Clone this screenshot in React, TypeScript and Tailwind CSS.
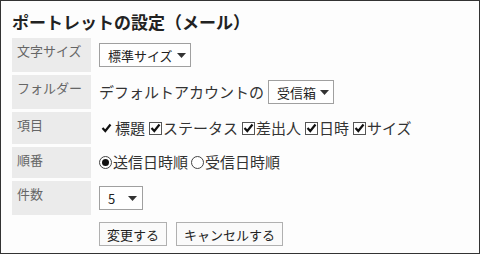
const jp = "font-['Noto_Sans_CJK_JP','Noto_Sans',sans-serif]"

function Arrow() {
  return (
    <svg width="9" height="5" viewBox="0 0 9 5" className="ml-[4px] shrink-0">
      <path d="M0 0 H9 L4.5 5 Z" fill="#333" />
    </svg>
  )
}

function Select({ label, w }: { label: string; w: string }) {
  return (
    <span
      className={`inline-flex h-[24px] items-center justify-between whitespace-nowrap border border-[#a0a0a0] bg-white pl-[8px] pr-[5px] text-[13px] leading-none text-[#222] ${w}`}
    >
      <span>{label}</span>
      <Arrow />
    </span>
  )
}

function Check({ boxed = true }: { boxed?: boolean }) {
  const mark = (
    <svg width="11" height="10" viewBox="0 0 11 10">
      <path d="M1.5 5 L4.3 8 L9.5 1.5" fill="none" stroke="#111" strokeWidth="2.2" />
    </svg>
  )
  if (!boxed) return <span className="mr-[2px] inline-flex h-[13px] w-[13px] items-center justify-center">{mark}</span>
  return (
    <span className="mr-[1px] inline-flex h-[13px] w-[13px] items-center justify-center border border-[#555] bg-white">
      {mark}
    </span>
  )
}

function Radio({ on }: { on?: boolean }) {
  return (
    <span className="mr-[1px] inline-flex h-[13px] w-[13px] items-center justify-center rounded-full border border-[#444] bg-white">
      {on && <span className="h-[7px] w-[7px] rounded-full bg-[#111]" />}
    </span>
  )
}

const items = [
  { label: "標題", boxed: false },
  { label: "ステータス", boxed: true },
  { label: "差出人", boxed: true },
  { label: "日時", boxed: true },
  { label: "サイズ", boxed: true },
]

function Label({ children }: { children: React.ReactNode }) {
  return <div className="bg-[#ebebeb] px-[5px] pt-[3px] text-[13px] leading-[19px] text-[#666]">{children}</div>
}

export default function App() {
  return (
    <div className={`h-[254px] w-[480px] border border-[#333] bg-[#fdfdfd] px-[11px] pt-[9px] ${jp}`}>
      <h1 className="text-[17px] font-bold leading-[24px] text-[#222]">ポートレットの設定（メール）</h1>

      <div className="mt-[4px] grid grid-cols-[79px_1fr] gap-[3px]">
        <Label>文字サイズ</Label>
        <div className="flex h-[34px] items-center pl-[5px]">
          <Select label="標準サイズ" w="w-[92px]" />
        </div>

        <Label>フォルダー</Label>
        <div className="flex h-[34px] items-center pl-[5px] text-[15px] text-[#333]">
          <span>デフォルトアカウントの</span>
          <span className="ml-[4px] flex">
            <Select label="受信箱" w="w-[66px]" />
          </span>
        </div>

        <Label>項目</Label>
        <div className="flex h-[32px] items-center gap-[4px] pl-[6px] text-[15px] text-[#333]">
          {items.map((it) => (
            <span key={it.label} className="inline-flex items-center">
              <Check boxed={it.boxed} />
              {it.label}
            </span>
          ))}
        </div>

        <Label>順番</Label>
        <div className="flex h-[31px] items-center gap-[3px] pl-[5px] text-[15px] text-[#333]">
          <span className="inline-flex items-center">
            <Radio on />
            送信日時順
          </span>
          <span className="inline-flex items-center">
            <Radio />
            受信日時順
          </span>
        </div>

        <Label>件数</Label>
        <div className="flex h-[34px] items-center pl-[5px]">
          <Select label="5" w="w-[44px]" />
        </div>

        <div />
        <div className="flex gap-[9px] pl-[5px] pt-[4px]">
          <button className="h-[24px] whitespace-nowrap border border-[#b0b0b0] bg-[#fafafa] px-[7px] text-[13px] leading-none text-[#222]">
            変更する
          </button>
          <button className="h-[24px] whitespace-nowrap border border-[#b0b0b0] bg-[#fafafa] px-[7px] text-[13px] leading-none text-[#222]">
            キャンセルする
          </button>
        </div>
      </div>
    </div>
  )
}
